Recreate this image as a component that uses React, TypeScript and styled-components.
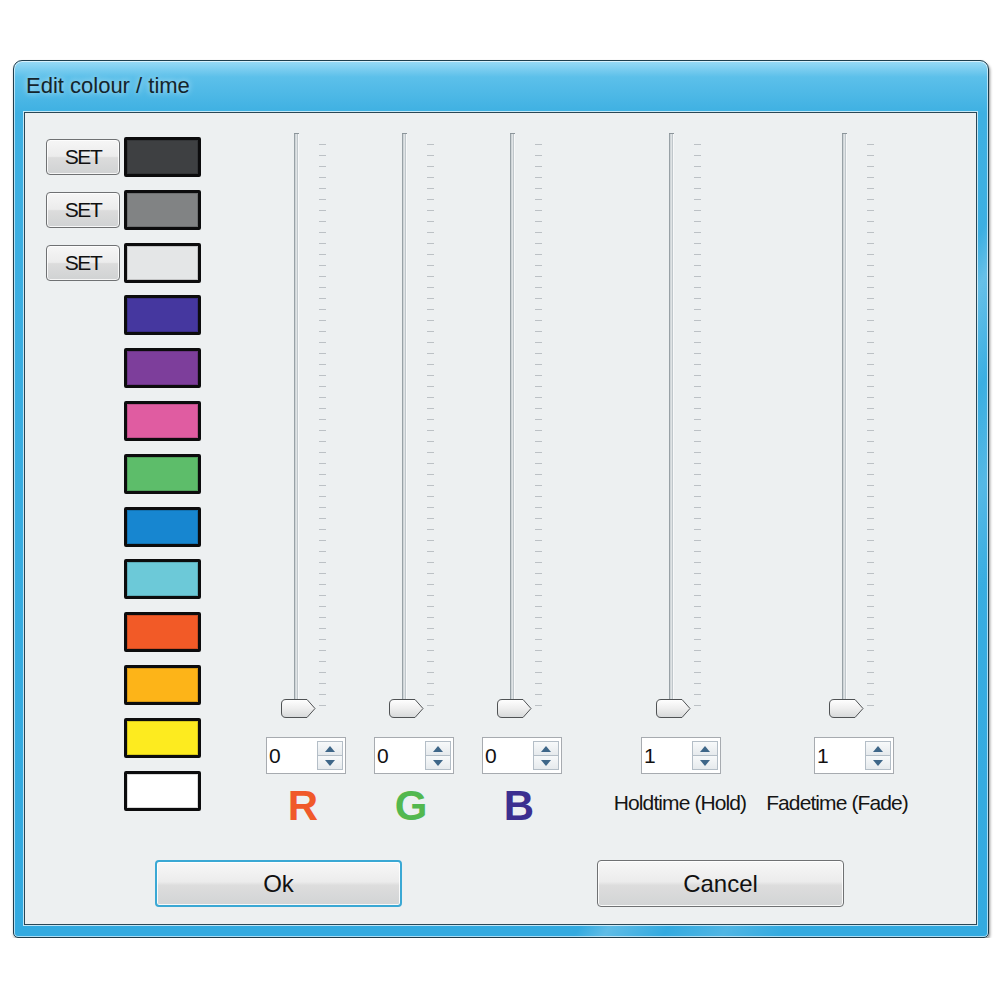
import React from "react";
import styled, { createGlobalStyle } from "styled-components";

const Global = createGlobalStyle`
  *, *::before, *::after { box-sizing: border-box; }
  html, body { margin: 0; padding: 0; background: #ffffff; }
  body { font-family: "Liberation Sans", Arial, sans-serif; }
`;

const Window = styled.div`
  width: 976px;
  height: 878px;
  margin: 60px 0 0 13px;
  display: flex;
  flex-direction: column;
  border: 1px solid #1f3d4c;
  border-radius: 9px 9px 5px 5px;
  padding: 0 11px 12px 10px;
  background:
    linear-gradient(120deg, transparent 0 72%, rgba(255,255,255,0.22) 74%, transparent 78%, rgba(255,255,255,0.14) 82%, transparent 86%),
    linear-gradient(180deg, #9adaf5 0px, #5cc0ea 16px, #3eb0e2 52px, #33aae0 100%);
  box-shadow: inset 0 0 0 1px rgba(255,255,255,0.6), 1px 2px 3px rgba(0,0,0,0.45);
`;

const TitleBar = styled.div`
  height: 51px;
  flex: none;
  padding: 14px 0 0 2px;
  font-size: 22px;
  line-height: 22px;
  color: #14242b;
  text-shadow: 0 0 6px rgba(255,255,255,0.75);
`;

const Client = styled.div`
  flex: 1;
  display: flex;
  flex-direction: column;
  border: 1px solid #2a4756;
  background: #edf0f1;
  box-shadow: 0 0 0 1px rgba(255,255,255,0.7);
`;

const MainRow = styled.div`
  display: flex;
  align-items: flex-start;
  padding: 20px 0 0 21px;
`;

const Palette = styled.div`
  display: flex;
  flex-direction: column;
  gap: 12.8px;
  margin-top: 4px;
`;

const PaletteRow = styled.div`
  display: flex;
  align-items: center;
  gap: 4px;
`;

const SetButton = styled.button`
  width: 74px;
  height: 36px;
  padding: 0;
  border: 1px solid #6f7173;
  border-radius: 4px;
  background: linear-gradient(180deg, #f6f6f6 0%, #ececec 48%, #dcdcdc 52%, #d0d2d3 100%);
  box-shadow: inset 0 0 0 1px rgba(255,255,255,0.8);
  font-family: "Liberation Sans", Arial, sans-serif;
  font-size: 21px;
  letter-spacing: -1.4px;
  color: #111;
`;

const Spacer = styled.div`
  width: 74px;
  height: 36px;
`;

const Swatch = styled.div<{ $color: string }>`
  width: 77px;
  height: 40px;
  border: 3px solid #0c0c0d;
  border-radius: 2px;
  background: ${(p) => p.$color};
  box-shadow: inset 0 0 0 1px rgba(0,0,0,0.15);
`;

const SliderGroup = styled.div<{ $offset: number }>`
  width: 80px;
  flex: none;
  display: flex;
  flex-direction: column;
  align-items: center;
  margin-left: ${(p) => p.$offset}px;
`;

const SliderBox = styled.div`
  position: relative;
  width: 80px;
  height: 587px;
  display: flex;
  align-items: flex-start;
  padding-left: 28px;
`;

const Track = styled.div`
  width: 5px;
  height: 577px;
  border-top: 1px solid #8c959a;
  background: linear-gradient(90deg, #98a1a6 0 1px, #cfd5d8 1px 2px, #dfe3e5 2px 3px, #c0c7cb 3px 4px, #f7f8f9 4px);
`;

const Ticks = styled.div`
  width: 7px;
  height: 570px;
  margin: 11px 0 0 20px;
  background: repeating-linear-gradient(180deg, #bcc1c5 0 1px, transparent 1px 11px);
`;

const ThumbWrap = styled.div`
  position: absolute;
  left: 15px;
  bottom: 2px;
  width: 35px;
  height: 19px;
`;

const SpinBox = styled.div`
  margin-top: 17px;
  width: 80px;
  height: 37px;
  border: 1px solid #a7abb0;
  background: #ffffff;
  display: flex;
  align-items: center;
  justify-content: space-between;
  padding: 0 2px 0 2px;
`;

const SpinValue = styled.span`
  font-size: 21px;
  line-height: 21px;
  color: #111;
`;

const SpinButtons = styled.div`
  width: 26px;
  height: 29px;
  display: flex;
  flex-direction: column;
`;

const SpinHalf = styled.div`
  flex: 1;
  display: flex;
  align-items: center;
  justify-content: center;
  border: 1px solid #b4bec7;
  background: linear-gradient(180deg, #f7f9fa 0%, #e6eaed 100%);
  & + & { border-top: none; }
`;

const ColorLetter = styled.div<{ $color: string }>`
  margin-top: 11px;
  margin-right: 6px;
  font-size: 42px;
  line-height: 42px;
  font-weight: bold;
  color: ${(p) => p.$color};
`;

const TextLabel = styled.div<{ $shift: number }>`
  margin-top: 18px;
  margin-right: ${(p) => p.$shift}px;
  font-size: 21px;
  line-height: 21px;
  letter-spacing: -0.9px;
  white-space: nowrap;
  color: #151515;
`;

const ButtonRow = styled.div`
  margin-top: auto;
  display: flex;
  gap: 195px;
  padding: 0 0 17px 130px;
`;

const DialogButton = styled.button<{ $focused?: boolean }>`
  width: 247px;
  height: 47px;
  padding: 0;
  border: ${(p) => (p.$focused ? "2px solid #3aa8d4" : "1px solid #6f7173")};
  border-radius: 4px;
  background: linear-gradient(180deg, #f7f7f7 0%, #ececec 46%, #dddddd 54%, #d2d4d5 100%);
  box-shadow: inset 0 0 0 1px rgba(255,255,255,0.85);
  font-family: "Liberation Sans", Arial, sans-serif;
  font-size: 24px;
  color: #111;
`;

const Thumb = () => (
  <svg width="35" height="19" viewBox="0 0 35 19">
    <defs>
      <linearGradient id="thumbg" x1="0" y1="0" x2="0" y2="1">
        <stop offset="0" stopColor="#ffffff" />
        <stop offset="0.5" stopColor="#eeeeee" />
        <stop offset="1" stopColor="#d6d8d9" />
      </linearGradient>
    </defs>
    <path
      d="M5 0.5 H26 L34 9.5 L26 18.5 H5 Q0.5 18.5 0.5 14 V5 Q0.5 0.5 5 0.5 Z"
      fill="url(#thumbg)"
      stroke="#4f5254"
      strokeWidth="1"
    />
  </svg>
);

const Arrow = ({ up }: { up?: boolean }) => (
  <svg width="10" height="6" viewBox="0 0 10 6">
    <polygon points={up ? "0,6 10,6 5,0" : "0,0 10,0 5,6"} fill="#3e6688" />
  </svg>
);

const swatches = [
  "#3e4042",
  "#818384",
  "#e4e6e7",
  "#45379f",
  "#7d3e9b",
  "#e05ca1",
  "#5dbd6a",
  "#1786d0",
  "#6cc9d8",
  "#f25a27",
  "#fdb418",
  "#fdeb1f",
  "#ffffff",
];

type Slider = {
  offset: number;
  value: string;
  letter?: { text: string; color: string };
  label?: string;
  shift?: number;
};

const sliders: Slider[] = [
  { offset: 65, value: "0", letter: { text: "R", color: "#f0592a" } },
  { offset: 28, value: "0", letter: { text: "G", color: "#53b84f" } },
  { offset: 28, value: "0", letter: { text: "B", color: "#3c2f90" } },
  { offset: 79, value: "1", label: "Holdtime (Hold)", shift: 2 },
  { offset: 93, value: "1", label: "Fadetime (Fade)", shift: 34 },
];

export default function App() {
  return (
    <>
      <Global />
      <Window>
        <TitleBar>Edit colour / time</TitleBar>
        <Client>
          <MainRow>
            <Palette>
              {swatches.map((c, i) => (
                <PaletteRow key={i}>
                  {i < 3 ? <SetButton>SET</SetButton> : <Spacer />}
                  <Swatch $color={c} />
                </PaletteRow>
              ))}
            </Palette>
            {sliders.map((s, i) => (
              <SliderGroup key={i} $offset={s.offset}>
                <SliderBox>
                  <Track />
                  <Ticks />
                  <ThumbWrap>
                    <Thumb />
                  </ThumbWrap>
                </SliderBox>
                <SpinBox>
                  <SpinValue>{s.value}</SpinValue>
                  <SpinButtons>
                    <SpinHalf>
                      <Arrow up />
                    </SpinHalf>
                    <SpinHalf>
                      <Arrow />
                    </SpinHalf>
                  </SpinButtons>
                </SpinBox>
                {s.letter ? (
                  <ColorLetter $color={s.letter.color}>{s.letter.text}</ColorLetter>
                ) : (
                  <TextLabel $shift={s.shift ?? 0}>{s.label}</TextLabel>
                )}
              </SliderGroup>
            ))}
          </MainRow>
          <ButtonRow>
            <DialogButton $focused>Ok</DialogButton>
            <DialogButton>Cancel</DialogButton>
          </ButtonRow>
        </Client>
      </Window>
    </>
  );
}
